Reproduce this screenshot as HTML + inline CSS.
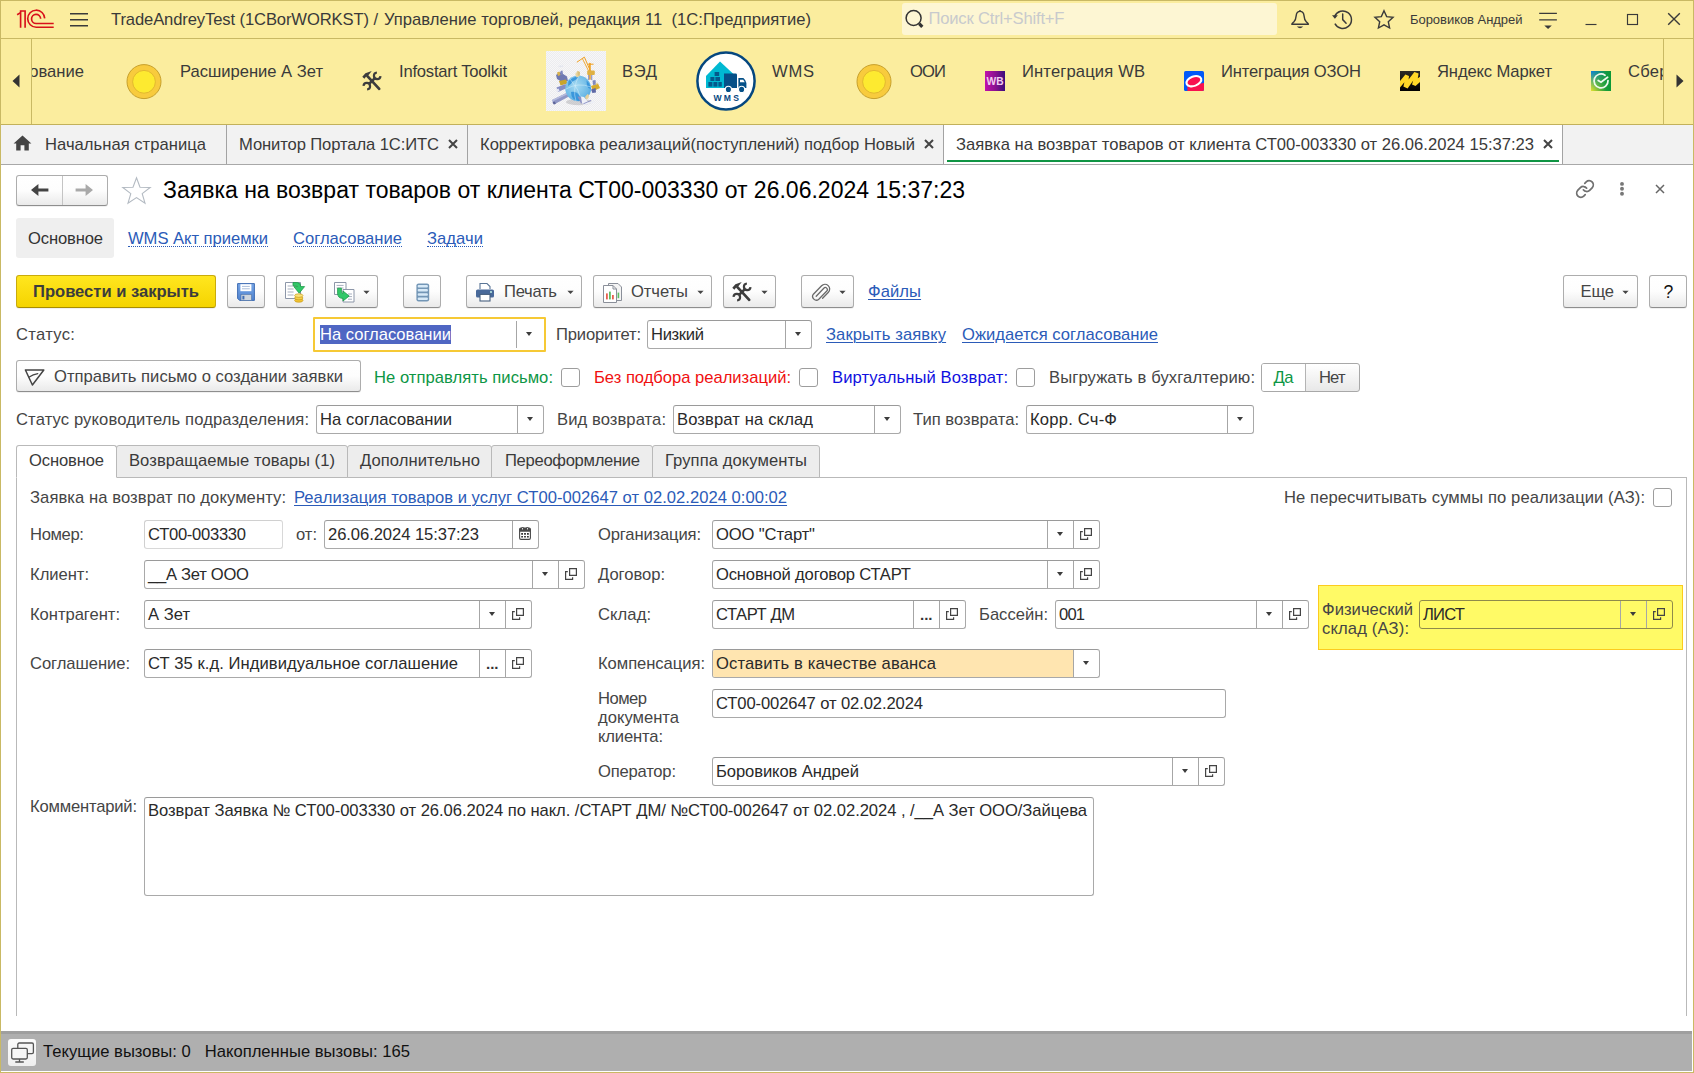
<!DOCTYPE html>
<html lang="ru"><head><meta charset="utf-8"><title>Заявка на возврат товаров от клиента</title>
<style>
*{box-sizing:border-box}
html,body{margin:0;padding:0}
body{width:1694px;height:1073px;overflow:hidden;position:relative;background:#fff;
 font-family:"Liberation Sans",sans-serif;font-size:16.6px;color:#454545;}
.a{position:absolute;white-space:nowrap}
.t{position:absolute;white-space:nowrap}
#titlebar{left:0;top:0;width:1694px;height:39px;background:#fbed9e;border-bottom:1px solid #c9b964}
#sections{left:0;top:39px;width:1694px;height:86px;background:#fbed9e;border-bottom:1px solid #c2b15b}
#tabs{left:0;top:125px;width:1694px;height:40px;background:#f2f2f2;border-bottom:1px solid #a8a8a8}
#status{left:1px;top:1031px;width:1691px;height:40px;background:#afafaf;border-top:3px solid #9f9f9f}
.tsep{position:absolute;top:0;width:1px;height:39px;background:#a3a3a3}
.x{position:absolute;top:12px;width:14px;height:14px}
.btn{position:absolute;border:1px solid #adadad;border-bottom-color:#8e8e8e;border-radius:3px;background:linear-gradient(#ffffff 0%,#fdfdfd 50%,#eaeaea 100%);box-shadow:0 1px 0 rgba(0,0,0,.06);white-space:nowrap;color:#444}
.fld{position:absolute;border:1px solid #a9a9a9;border-top-color:#9a9a9a;border-radius:3px;background:#fff}
.d{position:absolute;width:1px;background:#a6a6a6}
.arr{position:absolute;width:0;height:0;border-left:3.75px solid transparent;border-right:3.75px solid transparent;border-top:4.2px solid #3c3c3c}
.lnk{color:#2b5bb8;text-decoration:underline;text-underline-offset:2px;text-decoration-thickness:1px}
.dl{color:#2b5bb8}
.dl::after{content:"";position:absolute;left:0;right:0;bottom:2px;border-bottom:1px dotted #2b5bb8}
.cb{position:absolute;width:19px;height:19px;border:1px solid #9d9d9d;border-radius:3px;background:#fff}
.ptab{position:absolute;top:445px;height:33px;border:1px solid #b9b9b9;background:#ededed;border-radius:3px 3px 0 0}
</style></head>
<body>
<div id="titlebar" class="a"></div>
<svg class="a" style="left:14px;top:8px" width="42" height="22" viewBox="0 0 42 22">
<g fill="none" stroke="#d8111b" stroke-width="1.65">
<path d="M3.1 6.7 L6.6 4.6"/>
<path d="M6.6 19.7 V3 H11.1 V19.7"/>
<path d="M39.7 19.2 H22.2 A8.5 8.5 0 1 1 30.7 10.4"/>
<path d="M39.7 15.5 H22.1 A4.55 4.55 0 1 1 26.65 10.7"/>
</g></svg>
<svg class="a" style="left:69px;top:11px" width="20" height="17" viewBox="0 0 20 17"><g stroke="#3a3a3a" stroke-width="1.4"><path d="M1 2.7H19M1 8.7H19M1 14.7H19"/></g></svg>
<div class="t" style="left:111px;top:10px;height:20px;line-height:20px;letter-spacing:-0.116px;color:#3a3a3a;">TradeAndreyTest (1CBorWORKST) /</div>
<div class="t" style="left:384px;top:10px;height:20px;line-height:20px;letter-spacing:0.026px;color:#3a3a3a;">Управление торговлей, редакция 11&nbsp; (1С:Предприятие)</div>
<div class="a" style="left:902px;top:3px;width:375px;height:32px;background:#fdf6d3;border-radius:3px"></div>
<svg class="a" style="left:904px;top:8px" width="22" height="22" viewBox="0 0 22 22"><circle cx="9.6" cy="10" r="7.5" fill="none" stroke="#333" stroke-width="1.5"/><path d="M15.2 15.7 L18.3 18.8" stroke="#333" stroke-width="3.2" stroke-linecap="butt"/></svg>
<div class="t" style="left:928.5px;top:9px;height:20px;line-height:20px;letter-spacing:-0.184px;color:#c8cacd;">Поиск Ctrl+Shift+F</div>
<svg class="a" style="left:1289px;top:8px" width="22" height="23" viewBox="0 0 22 23"><g fill="none" stroke="#3a3a3a" stroke-width="1.4" stroke-linejoin="round"><path d="M11 1.9 V3.4"/><path d="M11 3.4 C8.6 3.4 7.4 5.2 7.2 7.6 C7 10.4 6.4 12.4 4.8 13.9 C3.8 14.9 3 15.6 2.8 16.3 H19.4 C19.2 15.6 18.4 14.9 17.4 13.9 C15.8 12.4 15.2 10.4 15 7.6 C14.8 5.2 13.4 3.4 11 3.4Z"/></g><path d="M7.8 18.5 H14.2 Q11 21.8 7.8 18.5Z" fill="#3a3a3a"/></svg>
<svg class="a" style="left:1331px;top:8px" width="24" height="23" viewBox="0 0 24 23"><g fill="none" stroke="#3a3a3a" stroke-width="1.45"><path d="M3.7 8.2 A8.75 8.75 0 1 1 3.9 15.6"/><path d="M11.7 6 V11.6 L15.1 15.2" stroke-linecap="round"/></g><path d="M1 7.2 H6.9 L3.9 10.8Z" fill="#3a3a3a"/></svg>
<svg class="a" style="left:1372px;top:8px" width="24" height="23" viewBox="0 0 24 23"><path d="M12.00 2.80 L14.65 8.66 L21.04 9.36 L16.28 13.69 L17.58 19.99 L12.00 16.80 L6.42 19.99 L7.72 13.69 L2.96 9.36 L9.35 8.66Z" fill="none" stroke="#3a3a3a" stroke-width="1.4" stroke-linejoin="miter"/></svg>
<div class="t" style="left:1410px;top:12px;height:16px;line-height:16px;font-size:13px;letter-spacing:-0.043px;color:#3a3a3a;">Боровиков Андрей</div>
<svg class="a" style="left:1537px;top:9px" width="22" height="22" viewBox="0 0 22 22"><path d="M2.2 4.4H19.9M2.2 10.9H19.9" stroke="#3a3a3a" stroke-width="1.25"/><path d="M7.3 16.4 H14.8 L11.05 20Z" fill="#3a3a3a"/></svg>
<svg class="a" style="left:1584px;top:10px" width="14" height="18" viewBox="0 0 14 18"><path d="M1.5 14.5H12.5" stroke="#3a3a3a" stroke-width="1.15"/></svg>
<svg class="a" style="left:1626px;top:13px" width="13" height="13" viewBox="0 0 13 13"><rect x="1.5" y="1.5" width="10" height="10" fill="none" stroke="#3a3a3a" stroke-width="1.15"/></svg>
<svg class="a" style="left:1667px;top:12px" width="14" height="14" viewBox="0 0 14 14"><path d="M1.2 1.2 L12.8 12.8 M12.8 1.2 L1.2 12.8" stroke="#3a3a3a" stroke-width="1.4"/></svg>
<div id="sections" class="a"></div>
<div class="a" style="left:31px;top:39px;width:1px;height:85px;background:#c9b964"></div>
<div class="a" style="left:1663px;top:39px;width:1px;height:85px;background:#c9b964"></div>
<svg class="a" style="left:12px;top:74px" width="8" height="14" viewBox="0 0 8 14"><path d="M7.5 0.5 L7.5 13.5 L0.5 7Z" fill="#333"/></svg>
<svg class="a" style="left:1676px;top:74px" width="8" height="14" viewBox="0 0 8 14"><path d="M0.5 0.5 L0.5 13.5 L7.5 7Z" fill="#333"/></svg>
<div class="a" style="left:32px;top:39px;width:60px;height:85px;overflow:hidden"><div class="t" style="left:-106.234px;top:23px;height:20px;line-height:20px;color:#3a3a3a;">Администрирование</div>
</div>
<svg class="a" style="left:125.5px;top:63px" width="36" height="37" viewBox="0 0 36 37"><circle cx="18" cy="18.6" r="17" fill="#f8cb3d" stroke="#c7a02c" stroke-width="1"/><circle cx="18" cy="18.8" r="11.4" fill="#fdea30" stroke="#e3b82f" stroke-width="1"/></svg>
<div class="t" style="left:180px;top:62px;height:20px;line-height:20px;letter-spacing:-0.023px;color:#3a3a3a;">Расширение А Зет</div>
<svg class="a" style="left:362px;top:71px" width="20" height="20" viewBox="0 0 20 20"><g fill="none" stroke="#3d3d3d"><path d="M6.6 13.4 L13.4 6.6" stroke-width="2.7"/><path d="M18.5 5.1 A3.3 3.3 0 1 1 14.9 1.5" stroke-width="2.2"/><path d="M1.5 14.9 A3.3 3.3 0 1 1 5.1 18.5" stroke-width="2.2"/><path d="M5.4 5.2 L17.2 17.8" stroke-width="2.7" stroke-linecap="round"/></g><path d="M0.3 5.8 L3.4 2.3 L9.8 0.1 L6.4 4.3 L4.8 4.7 L2.4 7.8Z" fill="#3d3d3d"/></svg>
<div class="t" style="left:399px;top:62px;height:20px;line-height:20px;letter-spacing:-0.206px;color:#3a3a3a;">Infostart Toolkit</div>
<svg class="a" style="left:546px;top:51px" width="60" height="60" viewBox="0 0 60 60"><defs><pattern id="ck" width="2" height="2" patternUnits="userSpaceOnUse"><rect width="2" height="2" fill="#f7f7f8"/><rect width="1" height="1" fill="#ececef"/><rect x="1" y="1" width="1" height="1" fill="#ececef"/></pattern><radialGradient id="gl" cx=".42" cy=".4" r=".7"><stop offset="0" stop-color="#a5daf2"/><stop offset=".7" stop-color="#6cb9e6"/><stop offset="1" stop-color="#4a9fdc"/></radialGradient></defs>
<rect width="60" height="60" fill="url(#ck)"/>
<ellipse cx="33" cy="51" rx="13" ry="3.2" fill="#8e8e96" opacity=".35"/>
<g fill="none" stroke="#f0a020" stroke-linecap="round"><path d="M31.2 11 L38.4 6.1 L44.4 20" stroke-width="1"/><path d="M36.6 8 L42.6 20" stroke-width=".9"/><path d="M43.9 12.6 V28" stroke-width="1.7"/><path d="M42.3 13.2 H47.2" stroke-width="1"/></g>
<rect x="41.2" y="19.4" width="7.6" height="4.6" rx="1" fill="#dfb143"/><rect x="42" y="24" width="1.3" height="5" fill="#9aa0c8"/><rect x="45" y="24" width="1.3" height="5" fill="#9aa0c8"/>
<path d="M10 24 L14 21 L21 25.5 L22 30 L16 31 L11 28Z" fill="#6f79b2"/><path d="M11 21.5 L13.5 20.5 L14.5 24 L12 25Z" fill="#d9b24c"/><path d="M14.5 20 L16.5 19.6 L17 23.5 L15 24Z" fill="#7d86bd"/>
<path d="M13 30 L20 28.6 L21.5 32.6 L14.5 34.6Z" fill="#c9a42b"/>
<path d="M10.5 36.5 L19.5 33 L21 37 L12 41Z" fill="#858dc4"/><path d="M10 38.5 L12.5 37.5 L13.5 40 L11 41Z" fill="#e6e8f4"/>
<path d="M6 49 L21.5 41.5 L23 45.6 L8 53.6Z" fill="#8f97c6"/><path d="M6 49 L21.5 41.5 L22 43 L6.6 50.4Z" fill="#b4b9dc"/><path d="M6.4 51.4 L8 53.6 L10 52.6 L8.6 50.4Z" fill="#5d6599"/>
<path d="M45 35 L52 32.6 L54 37 L47 40.2Z" fill="#d6ab2d"/><path d="M46.5 29.5 L49.5 29 L50 33.4 L47 34Z" fill="#7f88be"/><path d="M49.5 32 L51.6 31.6 L52 33 L50 33.6Z" fill="#e8d7a4"/><path d="M45 38.5 L49.6 37 L50 41.4 L46.4 42Z" fill="#5f69a6"/>
<circle cx="32.2" cy="37.4" r="12.9" fill="url(#gl)"/>
<path d="M22.5 30 Q27 25.6 33 25.4 Q30 29 26.5 30.5 Q25 34 22 35Z M40.5 29.5 Q44.5 33 44.6 38 Q42 37.5 41 34.5Z M25 41 Q30 40 33 44 Q36 46 37 49.4 Q31 51 27 47.6 Q25 45 25 41Z" fill="#2f8fd9" opacity=".85"/>
<path d="M20 38 Q32 31 45 36 M24 28 Q33 38 36 50 M33 24.6 Q26 38 30 50" stroke="#d9f0fb" stroke-width=".6" fill="none" opacity=".8"/>
<path d="M29.2 23 L31.5 20 L34 21 L33.6 25 L30.6 26.4Z" fill="#e9d6a0"/><path d="M31.5 20 L34 21 L33.6 25 L31.6 24.6Z" fill="#d9bf7c"/>
<path d="M39 46 L41.5 43 L43 44 L42.4 47.4 L40 48.6Z" fill="#e6d09a"/>
<path d="M31.5 45.5 L35 46 L37 52 L35 52.4Z" fill="#8a90c4"/><path d="M35 45.6 L38 46 L42.5 51.4 L47 49.8 L49 51.4 L38 54 L36 52Z" fill="#eef0f7"/><path d="M37 52.4 L45 49 L45.4 49.8 L38 53Z" fill="#8a90c4"/>
<path d="M12 15.6 L14.6 14 L15.6 15 L17 13.4 L17.2 15.4 L14.6 16.6Z" fill="#e4e6ee"/>
</svg>
<div class="t" style="left:622px;top:62px;height:20px;line-height:20px;letter-spacing:0.656px;color:#3a3a3a;">ВЭД</div>
<svg class="a" style="left:696px;top:51px" width="60" height="60" viewBox="0 0 60 60"><circle cx="30" cy="30" r="28.6" fill="#fff" stroke="#05477f" stroke-width="2.5"/>
<path d="M10 25 L24 10.6 L38 23.6 L36 37 L10 37Z" fill="#00b9d2"/>
<g fill="#04598c"><rect x="12.4" y="31" width="4" height="4.6"/><rect x="17.4" y="31" width="4" height="4.6"/><rect x="22.4" y="31" width="3.4" height="4.6"/><rect x="14.4" y="26" width="4" height="4"/><rect x="19.4" y="26" width="4.6" height="4"/><rect x="18.6" y="21" width="4.6" height="4"/></g>
<path d="M28 22.4 H39.6 Q41 22.4 41 23.8 V37 H28Z" fill="#055088"/><path d="M42.4 27 H47.4 Q49.4 28.6 50.4 32 V37 H42.4Z" fill="#055088"/><path d="M44 28.8 H47.2 L48.8 31.2 H44Z" fill="#fff"/>
<circle cx="32.4" cy="38.4" r="3.1" fill="#055088" stroke="#fff" stroke-width="1.1"/><circle cx="45.6" cy="38.4" r="3.1" fill="#055088" stroke="#fff" stroke-width="1.1"/>
<text x="31.4" y="50.2" text-anchor="middle" font-family="Liberation Sans, sans-serif" font-weight="bold" font-size="8.6" letter-spacing="2.3" fill="#05477f">WMS</text></svg>
<div class="t" style="left:772px;top:62px;height:20px;line-height:20px;letter-spacing:0.719px;color:#3a3a3a;">WMS</div>
<svg class="a" style="left:855.5px;top:63px" width="36" height="37" viewBox="0 0 36 37"><circle cx="18" cy="18.6" r="17" fill="#f8cb3d" stroke="#c7a02c" stroke-width="1"/><circle cx="18" cy="18.8" r="11.4" fill="#fdea30" stroke="#e3b82f" stroke-width="1"/></svg>
<div class="t" style="left:910px;top:62px;height:20px;line-height:20px;letter-spacing:-0.875px;color:#3a3a3a;">ООИ</div>
<svg class="a" style="left:985px;top:71px" width="20" height="20" viewBox="0 0 20 20"><defs><linearGradient id="wb" x1="0" x2="1" y1="0" y2="0"><stop offset="0" stop-color="#c211ab"/><stop offset=".55" stop-color="#86108e"/><stop offset="1" stop-color="#3b0c7c"/></linearGradient></defs><rect width="20" height="20" fill="url(#wb)"/><text x="1.6" y="13.8" font-family="Liberation Sans, sans-serif" font-weight="bold" font-size="10.6" textLength="17" lengthAdjust="spacingAndGlyphs" fill="#f1cdf1">WB</text></svg>
<div class="t" style="left:1022px;top:62px;height:20px;line-height:20px;letter-spacing:0.138px;color:#3a3a3a;">Интеграция WB</div>
<svg class="a" style="left:1184px;top:71px" width="20" height="20" viewBox="0 0 20 20"><defs><clipPath id="oz"><rect width="20" height="20" rx="1.6"/></clipPath></defs><g clip-path="url(#oz)"><rect width="20" height="20" fill="#0059f9"/><path d="M3.4 20 L3.4 14 L20 12 L20 20Z" fill="#f8114f"/><ellipse cx="9.9" cy="10.2" rx="7.7" ry="4.7" fill="#f8114f" stroke="#fff" stroke-width="2.1" transform="rotate(-20 9.9 10.2)"/></g></svg>
<div class="t" style="left:1221px;top:62px;height:20px;line-height:20px;letter-spacing:-0.161px;color:#3a3a3a;">Интеграция ОЗОН</div>
<svg class="a" style="left:1400px;top:71px" width="20" height="20" viewBox="0 0 20 20"><defs><linearGradient id="ym" x1="0" x2="0" y1="0" y2="1"><stop offset="0" stop-color="#2b2b24"/><stop offset="1" stop-color="#000"/></linearGradient></defs><rect width="20" height="20" fill="url(#ym)"/><path d="M0 10 L5.4 3.6 L9 5 L8.6 8.6 L14.4 1 L18.6 2.6 L17.8 7.2 L20 5.8 L20 11 L15.5 15 L12 13.4 L13.2 9.6 L7.6 17.4 L3.4 15.6 L4.4 11.2 L0 16.4Z" fill="#ffd928"/></svg>
<div class="t" style="left:1437px;top:62px;height:20px;line-height:20px;letter-spacing:-0.134px;color:#3a3a3a;">Яндекс Маркет</div>
<svg class="a" style="left:1591px;top:71px" width="20" height="20" viewBox="0 0 20 20"><defs><linearGradient id="sb1" x1="0" x2="0" y1="0" y2="1"><stop offset="0" stop-color="#0a7fe2"/><stop offset=".5" stop-color="#6fb86a"/><stop offset="1" stop-color="#e8e22c"/></linearGradient><linearGradient id="sb2" x1="0" x2="1" y1="0" y2="0"><stop offset="0" stop-color="#119a3a" stop-opacity="0"/><stop offset=".75" stop-color="#119a3a" stop-opacity=".95"/><stop offset="1" stop-color="#0c9836"/></linearGradient></defs><rect width="20" height="20" fill="url(#sb1)"/><rect width="20" height="20" fill="url(#sb2)"/><g fill="none" stroke="#eef8ee" stroke-width="1.8" stroke-linecap="round"><path d="M17 9.6 A7 7 0 1 1 14 4.2"/><path d="M7.2 9.4 L10 11.2 L16.6 6.2"/></g></svg>
<div class="a" style="left:1628px;top:39px;width:35px;height:85px;overflow:hidden"><div class="t" style="left:0px;top:23px;height:20px;line-height:20px;color:#3a3a3a;letter-spacing:.25px;">СберМегаМаркет</div>
</div>
<div id="tabs" class="a"></div>
<svg class="a" style="left:13px;top:135px" width="19" height="16" viewBox="0 0 19 16"><path d="M9.5 0.6 L0.6 8.4 H3.2 V15.4 H7.6 V10.2 H11.4 V15.4 H15.8 V8.4 H18.4Z" fill="#444"/></svg>
<div class="t" style="left:45px;top:135px;height:20px;line-height:20px;letter-spacing:0.026px;color:#3a3a3a;">Начальная страница</div>
<div class="tsep" style="left:226px;top:125px"></div>
<div class="t" style="left:239px;top:135px;height:20px;line-height:20px;letter-spacing:-0.106px;color:#3a3a3a;">Монитор Портала 1С:ИТС</div>
<svg class="a" style="left:446px;top:137px" width="14" height="14" viewBox="0 0 14 14"><path d="M3 3 L11 11 M11 3 L3 11" stroke="#444" stroke-width="2"/></svg>
<div class="tsep" style="left:467px;top:125px"></div>
<div class="t" style="left:480px;top:135px;height:20px;line-height:20px;letter-spacing:-0.027px;color:#3a3a3a;">Корректировка реализаций(поступлений) подбор Новый</div>
<svg class="a" style="left:922px;top:137px" width="14" height="14" viewBox="0 0 14 14"><path d="M3 3 L11 11 M11 3 L3 11" stroke="#444" stroke-width="2"/></svg>
<div class="tsep" style="left:943px;top:125px"></div>
<div class="a" style="left:944px;top:125px;width:618px;height:39px;background:#fff"></div>
<div class="a" style="left:947px;top:160px;width:612px;height:2px;background:#0f9443"></div>
<div class="t" style="left:956px;top:135px;height:20px;line-height:20px;letter-spacing:-0.004px;color:#3a3a3a;">Заявка на возврат товаров от клиента СТ00-003330 от 26.06.2024 15:37:23</div>
<svg class="a" style="left:1541px;top:137px" width="14" height="14" viewBox="0 0 14 14"><path d="M3 3 L11 11 M11 3 L3 11" stroke="#444" stroke-width="2"/></svg>
<div class="tsep" style="left:1562px;top:125px"></div>
<div class="btn" style="left:16px;top:175px;width:92px;height:31px"></div>
<div class="a" style="left:62px;top:176px;width:1px;height:29px;background:#c4c4c4"></div>
<svg class="a" style="left:30px;top:182px" width="20" height="16" viewBox="0 0 20 16"><path d="M1 8 L8.4 2 V6.6 H18.4 V9.4 H8.4 V14Z" fill="#444"/></svg>
<svg class="a" style="left:74px;top:182px" width="20" height="16" viewBox="0 0 20 16"><path d="M19 8 L11.6 2 V6.6 H1.6 V9.4 H11.6 V14Z" fill="#a9a9a9"/></svg>
<svg class="a" style="left:121px;top:176px" width="31" height="29" viewBox="0 0 31 29"><path d="M15.5 1.8 L19 11.2 L29.2 11.4 L21.2 17.6 L24 27.2 L15.5 21.6 L7 27.2 L9.8 17.6 L1.8 11.4 L12 11.2 Z" fill="#fff" stroke="#b3bac2" stroke-width="1.1" stroke-linejoin="miter"/></svg>
<div class="t" style="left:163px;top:177px;height:27px;line-height:27px;font-size:23px;letter-spacing:0.007px;color:#000;">Заявка на возврат товаров от клиента СТ00-003330 от 26.06.2024 15:37:23</div>
<svg class="a" style="left:1575px;top:179px" width="20" height="20" viewBox="0 0 24 24"><g fill="none" stroke="#707070" stroke-width="2.1" stroke-linecap="round" stroke-linejoin="round"><path d="M10 13a5 5 0 0 0 7.54.54l3-3a5 5 0 0 0-7.07-7.07l-1.72 1.71"/><path d="M14 11a5 5 0 0 0-7.54-.54l-3 3a5 5 0 0 0 7.07 7.07l1.71-1.71"/></g></svg>
<svg class="a" style="left:1617px;top:180px" width="10" height="18" viewBox="0 0 10 18"><g fill="#777"><circle cx="5" cy="3.9" r="1.95"/><circle cx="5" cy="8.8" r="1.95"/><circle cx="5" cy="13.7" r="1.95"/></g></svg>
<svg class="a" style="left:1654px;top:183px" width="12" height="12" viewBox="0 0 12 12"><path d="M2 2 L10 10 M10 2 L2 10" stroke="#666" stroke-width="1.5"/></svg>
<div class="a" style="left:16px;top:218px;width:98px;height:40px;background:#efefef;border-radius:3px"></div>
<div class="t" style="left:28px;top:229px;height:20px;line-height:20px;letter-spacing:-0.150px;color:#333;">Основное</div>
<div class="t dl" style="left:128px;top:229px;height:20px;line-height:20px;letter-spacing:-0.039px;">WMS Акт приемки</div>
<div class="t dl" style="left:293px;top:229px;height:20px;line-height:20px;letter-spacing:-0.004px;">Согласование</div>
<div class="t dl" style="left:427px;top:229px;height:20px;line-height:20px;letter-spacing:0.056px;">Задачи</div>
<div class="btn" style="left:16px;top:275px;width:200px;height:33px;background:linear-gradient(#ffe61f,#f5d400);border-color:#c9ab0c;border-bottom-color:#a88d00"></div>
<div class="t" style="left:33px;top:282px;height:20px;line-height:20px;font-weight:bold;letter-spacing:-0.022px;color:#3c3c3c;">Провести и закрыть</div>
<div class="btn" style="left:227px;top:275px;width:38px;height:33px"><svg class="a" style="left:9px;top:7px" width="18" height="18" viewBox="0 0 18 18"><defs><linearGradient id="sv" x1="0" x2="0" y1="0" y2="1"><stop offset="0" stop-color="#77a6e6"/><stop offset="1" stop-color="#4f83d0"/></linearGradient></defs><path d="M.6 .6 H17.4 V17.4 H2.6 L.6 15.4Z" fill="url(#sv)" stroke="#3f6db3" stroke-width="1"/><rect x="3.4" y="1.2" width="11" height="7" fill="#fff"/><path d="M5 3.4 H12.8 M5 5.8 H12.8" stroke="#a9bddb" stroke-width="1"/><rect x="4" y="11.4" width="10.6" height="6" fill="#cfd6de" stroke="#4a6fa6" stroke-width=".6"/><rect x="5.4" y="12.8" width="2" height="3.6" fill="#3f6db3"/></svg></div>
<div class="btn" style="left:276px;top:275px;width:38px;height:33px"><svg class="a" style="left:7px;top:5px" width="24" height="23" viewBox="0 0 24 23"><path d="M1.5 1.5 H16.5 V17.5 H1.5Z" fill="#fff" stroke="#8c96a8" stroke-width="1"/><path d="M3.6 5 H9.6 M3.6 8 H9.6 M3.6 11 H9.6 M3.6 14 H9.6" stroke="#a7afbf" stroke-width="1"/><path d="M9 1.6 H13.6 Q16.6 2 16.8 5.6 L20.6 5.6 L15.2 12.2 L9.8 5.6 L13.4 5.6 Q13.2 4.6 12 4.6 H9Z" fill="#32c869" stroke="#1a9a46" stroke-width=".8"/><ellipse cx="14.8" cy="19.4" rx="4.2" ry="1.8" fill="#f3c531" stroke="#c59a20" stroke-width=".7"/><ellipse cx="14.8" cy="17" rx="4.2" ry="1.8" fill="#f7d348" stroke="#c59a20" stroke-width=".7"/><ellipse cx="14.8" cy="14.6" rx="4.2" ry="1.8" fill="#fbe278" stroke="#c59a20" stroke-width=".7"/></svg></div>
<div class="btn" style="left:325px;top:275px;width:53px;height:33px"><svg class="a" style="left:7px;top:5px" width="23" height="23" viewBox="0 0 23 23"><path d="M1.5 1.5 H13 V13.5 H1.5Z" fill="#fff" stroke="#8c96a8"/><path d="M3.6 4.4 H10.6 M3.6 7 H10.6" stroke="#a7afbf"/><path d="M10 8.5 H21 V21 H10Z" fill="#fff" stroke="#8c96a8"/><path d="M15 13 H19 M15 15.6 H19 M15 18.2 H19" stroke="#a7afbf"/><path d="M4.6 7.2 H8.4 V11.2 Q8.4 12.4 10 12.4 V10 L16.2 15 L10 20 V17.4 Q4.6 17.4 4.6 12Z" fill="#32c869" stroke="#1a9a46" stroke-width=".8"/></svg><svg class="a" style="left:35.6px;top:14px" width="9" height="5" viewBox="0 0 9 5"><path d="M1.4 0.8 H7.6 L4.5 4Z" fill="#444"/></svg></div>
<div class="btn" style="left:403px;top:275px;width:38px;height:33px"><svg class="a" style="left:12px;top:7px" width="14" height="19" viewBox="0 0 14 19"><rect x=".4" y=".4" width="12.8" height="18" rx="2.2" fill="#7396b6"/><g fill="#d7e9f7"><rect x="1.7" y="1.9" width="10.2" height="2.5" rx="1"/><rect x="1.7" y="6.1" width="10.2" height="2.5" rx="1"/><rect x="1.7" y="10.3" width="10.2" height="2.5" rx="1"/><rect x="1.7" y="14.5" width="10.2" height="2.5" rx="1"/></g></svg></div>
<div class="btn" style="left:466px;top:275px;width:116px;height:33px"><svg class="a" style="left:8px;top:6px" width="20" height="20" viewBox="0 0 20 20"><path d="M5 7 V1.5 H12 L15 4.5 V7" fill="#fff" stroke="#5a7596" stroke-width="1.1"/><rect x="1" y="7.4" width="18" height="8.2" rx="1.6" fill="#48699a"/><rect x="5" y="12.4" width="10" height="6.6" fill="#fff" stroke="#47607f" stroke-width="1.1"/><circle cx="16" cy="10" r=".9" fill="#cfe"/></svg><svg class="a" style="left:98.7px;top:14px" width="9" height="5" viewBox="0 0 9 5"><path d="M1.4 0.8 H7.6 L4.5 4Z" fill="#444"/></svg></div>
<div class="t" style="left:504px;top:282px;height:20px;line-height:20px;letter-spacing:-0.272px;">Печать</div>
<div class="btn" style="left:593px;top:275px;width:119px;height:33px"><svg class="a" style="left:8px;top:5px" width="22" height="23" viewBox="0 0 22 23"><path d="M6.5 2.5 H16 L19.5 6 V19.5 H6.5Z" fill="#f4f4f4" stroke="#8a8f99"/><path d="M1.5 4.5 H11 L14.5 8 V21.5 H1.5Z" fill="#fff" stroke="#8a8f99"/><path d="M11 4.5 V8 H14.5" fill="none" stroke="#8a8f99"/><rect x="4" y="12.4" width="1.8" height="6" fill="#e8604f"/><rect x="7" y="10.6" width="1.8" height="7.8" fill="#5cbf62"/><rect x="10" y="14" width="1.8" height="4.4" fill="#e8604f"/><rect x="15.6" y="11.6" width="1.6" height="5.6" fill="#5cbf62"/></svg><svg class="a" style="left:101.7px;top:14px" width="9" height="5" viewBox="0 0 9 5"><path d="M1.4 0.8 H7.6 L4.5 4Z" fill="#444"/></svg></div>
<div class="t" style="left:631px;top:282px;height:20px;line-height:20px;letter-spacing:-0.072px;">Отчеты</div>
<div class="btn" style="left:723px;top:275px;width:53px;height:33px"><svg class="a" style="left:8px;top:6px" width="20" height="20" viewBox="0 0 20 20"><g fill="none" stroke="#3d3d3d"><path d="M6.6 13.4 L13.4 6.6" stroke-width="2.7"/><path d="M18.5 5.1 A3.3 3.3 0 1 1 14.9 1.5" stroke-width="2.2"/><path d="M1.5 14.9 A3.3 3.3 0 1 1 5.1 18.5" stroke-width="2.2"/><path d="M5.4 5.2 L17.2 17.8" stroke-width="2.7" stroke-linecap="round"/></g><path d="M0.3 5.8 L3.4 2.3 L9.8 0.1 L6.4 4.3 L4.8 4.7 L2.4 7.8Z" fill="#3d3d3d"/></svg><svg class="a" style="left:35.7px;top:14px" width="9" height="5" viewBox="0 0 9 5"><path d="M1.4 0.8 H7.6 L4.5 4Z" fill="#444"/></svg></div>
<div class="btn" style="left:801px;top:275px;width:53px;height:33px"><svg class="a" style="left:8px;top:5px" width="22" height="22" viewBox="0 0 22 22"><path d="M6.2 15.2 L13.8 7.2 A2 2 0 0 1 16.8 10 L8.8 18.2 A3.7 3.7 0 0 1 3.4 13.2 L11.6 4.8 A4.6 4.6 0 0 1 18.4 11.2 L12.6 17.2" fill="none" stroke="#6a6a6a" stroke-width="1.3" stroke-linecap="round"/></svg><svg class="a" style="left:35.7px;top:14px" width="9" height="5" viewBox="0 0 9 5"><path d="M1.4 0.8 H7.6 L4.5 4Z" fill="#444"/></svg></div>
<div class="t lnk" style="left:868px;top:282px;height:20px;line-height:20px;letter-spacing:0.066px;">Файлы</div>
<div class="btn" style="left:1563px;top:275px;width:75px;height:33px"><svg class="a" style="left:57px;top:14px" width="9" height="5" viewBox="0 0 9 5"><path d="M1.4 0.8 H7.6 L4.5 4Z" fill="#444"/></svg></div>
<div class="t" style="left:1580.5px;top:282px;height:20px;line-height:20px;letter-spacing:-0.133px;">Еще</div>
<div class="btn" style="left:1649px;top:275px;width:38px;height:33px"></div>
<div class="t" style="left:1663.5px;top:282px;height:21px;line-height:21px;font-size:17.6px;color:#111;">?</div>
<div class="t" style="left:16px;top:325px;height:20px;line-height:20px;letter-spacing:0.320px;">Статус:</div>
<div class="a" style="left:313px;top:317px;width:233px;height:35px;border:2px solid #f6c935;border-radius:1px;background:#fff"></div>
<div class="a" style="left:320px;top:325px;width:131px;height:19px;background:#4f66c3"></div>
<div class="t" style="left:320px;top:325px;height:20px;line-height:20px;letter-spacing:-0.029px;color:#fff;">На согласовании</div>
<div class="d" style="left:516px;top:321px;height:27px"></div>
<div class="arr" style="left:525.8px;top:332px"></div>
<div class="t" style="left:556px;top:325px;height:20px;line-height:20px;letter-spacing:-0.161px;">Приоритет:</div>
<div class="fld" style="left:647px;top:320px;width:165px;height:29px;"></div>
<div class="d" style="left:785px;top:321px;height:27px"></div>
<div class="arr" style="left:794.8px;top:332px"></div>
<div class="t" style="left:651px;top:325px;height:20px;line-height:20px;letter-spacing:-0.334px;color:#2a2a2a;">Низкий</div>
<div class="t" style="left:826px;top:325px;height:20px;line-height:20px;letter-spacing:0.084px;color:#2b5bb8;text-decoration:underline;text-underline-offset:2px;text-decoration-thickness:1px;">Закрыть заявку</div>
<div class="t" style="left:962px;top:325px;height:20px;line-height:20px;letter-spacing:0.013px;color:#2b5bb8;text-decoration:underline;text-underline-offset:2px;text-decoration-thickness:1px;">Ожидается согласование</div>
<div class="btn" style="left:16px;top:360px;width:345px;height:32px"></div>
<svg class="a" style="left:23px;top:367px" width="24" height="20" viewBox="0 0 24 20"><g fill="none" stroke="#444" stroke-width="1.5" stroke-linejoin="round" stroke-linecap="round"><path d="M2.4 3 H20.8 L9.4 18 Z"/><path d="M6.3 10.1 Q10 7.6 14.8 6.7" stroke-width="1.2"/></g></svg>
<div class="t" style="left:54px;top:367px;height:20px;line-height:20px;letter-spacing:0.020px;color:#444;">Отправить письмо о создании заявки</div>
<div class="t" style="left:374px;top:368px;height:20px;line-height:20px;letter-spacing:0.043px;color:#0d9645;">Не отправлять письмо:</div>
<div class="cb" style="left:561px;top:368px"></div>
<div class="t" style="left:594px;top:368px;height:20px;line-height:20px;letter-spacing:-0.020px;color:#f01010;">Без подбора реализаций:</div>
<div class="cb" style="left:799px;top:368px"></div>
<div class="t" style="left:832px;top:368px;height:20px;line-height:20px;letter-spacing:0.081px;color:#1010e0;">Виртуальный Возврат:</div>
<div class="cb" style="left:1016px;top:368px"></div>
<div class="t" style="left:1049px;top:368px;height:20px;line-height:20px;letter-spacing:0.115px;">Выгружать в бухгалтерию:</div>
<div class="btn" style="left:1261px;top:363px;width:99px;height:29px;box-shadow:none;border-color:#a8a8a8;background:linear-gradient(#fff,#e8e8e8)"></div>
<div class="a" style="left:1262px;top:364px;width:44px;height:27px;background:#fff;border-radius:2px 0 0 2px;border-right:1px solid #b4b4b4"></div>
<div class="t" style="left:1273.5px;top:368px;height:20px;line-height:20px;letter-spacing:-0.469px;color:#0d9645;">Да</div>
<div class="t" style="left:1319px;top:368px;height:20px;line-height:20px;letter-spacing:-0.883px;">Нет</div>
<div class="t" style="left:16px;top:410px;height:20px;line-height:20px;letter-spacing:0.124px;">Статус руководитель подразделения:</div>
<div class="fld" style="left:316px;top:405px;width:228px;height:29px;"></div>
<div class="d" style="left:517px;top:406px;height:27px"></div>
<div class="arr" style="left:526.8px;top:417px"></div>
<div class="t" style="left:320px;top:410px;height:20px;line-height:20px;letter-spacing:0.042px;color:#2a2a2a;">На согласовании</div>
<div class="t" style="left:557px;top:410px;height:20px;line-height:20px;letter-spacing:0.077px;">Вид возврата:</div>
<div class="fld" style="left:673px;top:405px;width:228px;height:29px;"></div>
<div class="d" style="left:874px;top:406px;height:27px"></div>
<div class="arr" style="left:883.8px;top:417px"></div>
<div class="t" style="left:677px;top:410px;height:20px;line-height:20px;letter-spacing:0.121px;color:#2a2a2a;">Возврат на склад</div>
<div class="t" style="left:913px;top:410px;height:20px;line-height:20px;letter-spacing:0.023px;">Тип возврата:</div>
<div class="fld" style="left:1026px;top:405px;width:228px;height:29px;"></div>
<div class="d" style="left:1227px;top:406px;height:27px"></div>
<div class="arr" style="left:1236.8px;top:417px"></div>
<div class="t" style="left:1030px;top:410px;height:20px;line-height:20px;letter-spacing:0.203px;color:#2a2a2a;">Корр. Сч-Ф</div>
<div class="a" style="left:16px;top:477px;width:1671px;height:539px;border:1px solid #b9b9b9;border-bottom:none"></div>
<div class="ptab" style="left:347px;width:145px;"></div>
<div class="t" style="left:360px;top:451px;height:20px;line-height:20px;letter-spacing:0.047px;color:#3a3a3a;">Дополнительно</div>
<div class="ptab" style="left:491px;width:162px;"></div>
<div class="t" style="left:505px;top:451px;height:20px;line-height:20px;letter-spacing:-0.303px;color:#3a3a3a;">Переоформление</div>
<div class="ptab" style="left:652px;width:168px;"></div>
<div class="t" style="left:665px;top:451px;height:20px;line-height:20px;letter-spacing:0.067px;color:#3a3a3a;">Группа документы</div>
<div class="ptab" style="left:116px;width:232px;"></div>
<div class="t" style="left:129px;top:451px;height:20px;line-height:20px;letter-spacing:0.053px;color:#3a3a3a;">Возвращаемые товары (1)</div>
<div class="ptab" style="left:16px;width:101px;background:#fff;border-bottom-color:#fff;"></div>
<div class="t" style="left:29px;top:451px;height:20px;line-height:20px;letter-spacing:-0.150px;color:#3a3a3a;">Основное</div>
<div class="t" style="left:30px;top:488px;height:20px;line-height:20px;letter-spacing:0.077px;">Заявка на возврат по документу:</div>
<div class="t" style="left:294px;top:488px;height:20px;line-height:20px;letter-spacing:0.019px;color:#2b5bb8;text-decoration:underline;text-underline-offset:2px;text-decoration-thickness:1px;">Реализация товаров и услуг СТ00-002647 от 02.02.2024 0:00:02</div>
<div class="t" style="left:1284px;top:488px;height:20px;line-height:20px;letter-spacing:0.081px;">Не пересчитывать суммы по реализации (АЗ):</div>
<div class="cb" style="left:1653px;top:488px"></div>
<div class="t" style="left:30px;top:525px;height:20px;line-height:20px;letter-spacing:-0.341px;">Номер:</div>
<div class="fld" style="left:144px;top:520px;width:139px;height:29px;border-color:#d0d0d0 #d8d8d8 #d8d8d8 #d0d0d0;"></div>
<div class="t" style="left:148px;top:525px;height:20px;line-height:20px;letter-spacing:-0.294px;color:#2a2a2a;">СТ00-003330</div>
<div class="t" style="left:296px;top:525px;height:20px;line-height:20px;letter-spacing:-0.039px;">от:</div>
<div class="fld" style="left:324px;top:520px;width:215px;height:29px;"></div>
<div class="d" style="left:512px;top:521px;height:27px"></div>
<svg class="a" style="left:519px;top:527px" width="12" height="14" viewBox="0 0.6 12 14"><rect x=".6" y="1.6" width="10.8" height="11.4" rx="1.3" fill="#fff" stroke="#484848" stroke-width="1.1"/><path d="M.6 5.4 V2.9 Q.6 1.6 1.9 1.6 H10.1 Q11.4 1.6 11.4 2.9 V5.4Z" fill="#4a4a4a"/><ellipse cx="3.6" cy="2.2" rx="1.25" ry="1.7" fill="#4a4a4a"/><ellipse cx="8.4" cy="2.2" rx="1.25" ry="1.7" fill="#4a4a4a"/><ellipse cx="3.6" cy="2.3" rx=".45" ry=".9" fill="#fff"/><ellipse cx="8.4" cy="2.3" rx=".45" ry=".9" fill="#fff"/><g fill="#2c2c2c"><rect x="2.2" y="6.6" width="1.8" height="1.7" rx=".3"/><rect x="5.1" y="6.6" width="1.8" height="1.7" rx=".3"/><rect x="8" y="6.6" width="1.8" height="1.7" rx=".3"/><rect x="2.2" y="9.5" width="1.8" height="1.7" rx=".3"/><rect x="5.1" y="9.5" width="1.8" height="1.7" rx=".3"/><rect x="8" y="9.5" width="1.8" height="1.7" rx=".3"/></g></svg>
<div class="t" style="left:328px;top:525px;height:20px;line-height:20px;letter-spacing:-0.070px;color:#2a2a2a;">26.06.2024 15:37:23</div>
<div class="t" style="left:598px;top:525px;height:20px;line-height:20px;letter-spacing:-0.155px;">Организация:</div>
<div class="fld" style="left:712px;top:520px;width:388px;height:29px;"></div>
<div class="d" style="left:1047px;top:521px;height:27px"></div>
<div class="arr" style="left:1056.8px;top:532px"></div>
<div class="d" style="left:1073px;top:521px;height:27px"></div>
<svg class="a" style="left:1079px;top:527px" width="14" height="14" viewBox="0 0 14 14"><g fill="none" stroke="#444" stroke-width="1.2"><path d="M5.6 1.6 H12.4 V8.4 H5.6Z"/><path d="M3.8 4.6 H1.6 V12.4 H8.6 V10.2"/></g></svg>
<div class="t" style="left:716px;top:525px;height:20px;line-height:20px;letter-spacing:-0.120px;color:#2a2a2a;">ООО "Старт"</div>
<div class="t" style="left:30px;top:565px;height:20px;line-height:20px;letter-spacing:-0.039px;">Клиент:</div>
<div class="fld" style="left:144px;top:560px;width:441px;height:29px;"></div>
<div class="d" style="left:532px;top:561px;height:27px"></div>
<div class="arr" style="left:541.8px;top:572px"></div>
<div class="d" style="left:558px;top:561px;height:27px"></div>
<svg class="a" style="left:564px;top:567px" width="14" height="14" viewBox="0 0 14 14"><g fill="none" stroke="#444" stroke-width="1.2"><path d="M5.6 1.6 H12.4 V8.4 H5.6Z"/><path d="M3.8 4.6 H1.6 V12.4 H8.6 V10.2"/></g></svg>
<div class="t" style="left:148px;top:565px;height:20px;line-height:20px;letter-spacing:-0.278px;color:#2a2a2a;">__А Зет ООО</div>
<div class="t" style="left:598px;top:565px;height:20px;line-height:20px;letter-spacing:-0.040px;">Договор:</div>
<div class="fld" style="left:712px;top:560px;width:388px;height:29px;"></div>
<div class="d" style="left:1047px;top:561px;height:27px"></div>
<div class="arr" style="left:1056.8px;top:572px"></div>
<div class="d" style="left:1073px;top:561px;height:27px"></div>
<svg class="a" style="left:1079px;top:567px" width="14" height="14" viewBox="0 0 14 14"><g fill="none" stroke="#444" stroke-width="1.2"><path d="M5.6 1.6 H12.4 V8.4 H5.6Z"/><path d="M3.8 4.6 H1.6 V12.4 H8.6 V10.2"/></g></svg>
<div class="t" style="left:716px;top:565px;height:20px;line-height:20px;letter-spacing:-0.179px;color:#2a2a2a;">Основной договор СТАРТ</div>
<div class="t" style="left:30px;top:605px;height:20px;line-height:20px;letter-spacing:-0.042px;">Контрагент:</div>
<div class="fld" style="left:144px;top:600px;width:388px;height:29px;"></div>
<div class="d" style="left:479px;top:601px;height:27px"></div>
<div class="arr" style="left:488.8px;top:612px"></div>
<div class="d" style="left:505px;top:601px;height:27px"></div>
<svg class="a" style="left:511px;top:607px" width="14" height="14" viewBox="0 0 14 14"><g fill="none" stroke="#444" stroke-width="1.2"><path d="M5.6 1.6 H12.4 V8.4 H5.6Z"/><path d="M3.8 4.6 H1.6 V12.4 H8.6 V10.2"/></g></svg>
<div class="t" style="left:148px;top:605px;height:20px;line-height:20px;letter-spacing:0.004px;color:#2a2a2a;">А Зет</div>
<div class="t" style="left:598px;top:605px;height:20px;line-height:20px;letter-spacing:0.072px;">Склад:</div>
<div class="fld" style="left:712px;top:600px;width:254px;height:29px;"></div>
<div class="d" style="left:913px;top:601px;height:27px"></div>
<div class="t" style="left:920px;top:606px;height:18px;line-height:18px;font-size:15px;color:#333;font-weight:bold;">...</div>
<div class="d" style="left:939px;top:601px;height:27px"></div>
<svg class="a" style="left:945px;top:607px" width="14" height="14" viewBox="0 0 14 14"><g fill="none" stroke="#444" stroke-width="1.2"><path d="M5.6 1.6 H12.4 V8.4 H5.6Z"/><path d="M3.8 4.6 H1.6 V12.4 H8.6 V10.2"/></g></svg>
<div class="t" style="left:716px;top:605px;height:20px;line-height:20px;letter-spacing:-0.460px;color:#2a2a2a;">СТАРТ ДМ</div>
<div class="t" style="left:979px;top:605px;height:20px;line-height:20px;letter-spacing:0.002px;">Бассейн:</div>
<div class="fld" style="left:1055px;top:600px;width:254px;height:29px;"></div>
<div class="d" style="left:1256px;top:601px;height:27px"></div>
<div class="arr" style="left:1265.8px;top:612px"></div>
<div class="d" style="left:1282px;top:601px;height:27px"></div>
<svg class="a" style="left:1288px;top:607px" width="14" height="14" viewBox="0 0 14 14"><g fill="none" stroke="#444" stroke-width="1.2"><path d="M5.6 1.6 H12.4 V8.4 H5.6Z"/><path d="M3.8 4.6 H1.6 V12.4 H8.6 V10.2"/></g></svg>
<div class="t" style="left:1059px;top:605px;height:20px;line-height:20px;letter-spacing:-0.844px;color:#2a2a2a;">001</div>
<div class="a" style="left:1318px;top:585px;width:365px;height:65px;background:#fffa66;border:1px solid #fccb1e"></div>
<div class="t" style="left:1322px;top:600px;height:20px;line-height:20px;letter-spacing:0.030px;">Физический</div>
<div class="t" style="left:1322px;top:619px;height:20px;line-height:20px;letter-spacing:0.148px;">склад (АЗ):</div>
<div class="fld" style="left:1419px;top:600px;width:254px;height:29px;background:#fffa66;border-color:#8f8a4a;"></div>
<div class="d" style="left:1620px;top:601px;height:27px"></div>
<div class="arr" style="left:1629.8px;top:612px"></div>
<div class="d" style="left:1646px;top:601px;height:27px"></div>
<svg class="a" style="left:1652px;top:607px" width="14" height="14" viewBox="0 0 14 14"><g fill="none" stroke="#444" stroke-width="1.2"><path d="M5.6 1.6 H12.4 V8.4 H5.6Z"/><path d="M3.8 4.6 H1.6 V12.4 H8.6 V10.2"/></g></svg>
<div class="t" style="left:1423px;top:605px;height:20px;line-height:20px;letter-spacing:-0.797px;color:#2a2a2a;">ЛИСТ</div>
<div class="t" style="left:30px;top:654px;height:20px;line-height:20px;letter-spacing:-0.062px;">Соглашение:</div>
<div class="fld" style="left:144px;top:649px;width:388px;height:29px;"></div>
<div class="d" style="left:479px;top:650px;height:27px"></div>
<div class="t" style="left:486px;top:655px;height:18px;line-height:18px;font-size:15px;color:#333;font-weight:bold;">...</div>
<div class="d" style="left:505px;top:650px;height:27px"></div>
<svg class="a" style="left:511px;top:656px" width="14" height="14" viewBox="0 0 14 14"><g fill="none" stroke="#444" stroke-width="1.2"><path d="M5.6 1.6 H12.4 V8.4 H5.6Z"/><path d="M3.8 4.6 H1.6 V12.4 H8.6 V10.2"/></g></svg>
<div class="t" style="left:148px;top:654px;height:20px;line-height:20px;letter-spacing:0.050px;color:#2a2a2a;">СТ 35 к.д. Индивидуальное соглашение</div>
<div class="t" style="left:598px;top:654px;height:20px;line-height:20px;letter-spacing:-0.053px;">Компенсация:</div>
<div class="fld" style="left:712px;top:649px;width:388px;height:29px;"></div>
<div class="a" style="left:713px;top:650px;width:360px;height:27px;background:#ffe5b0;border-radius:2px 0 0 2px"></div>
<div class="d" style="left:1073px;top:650px;height:27px"></div>
<div class="arr" style="left:1082.8px;top:661px"></div>
<div class="t" style="left:716px;top:654px;height:20px;line-height:20px;letter-spacing:0.131px;color:#2a2a2a;">Оставить в качестве аванса</div>
<div class="t" style="left:598px;top:689px;height:20px;line-height:20px;letter-spacing:-0.520px;">Номер</div>
<div class="t" style="left:598px;top:708px;height:20px;line-height:20px;letter-spacing:0.010px;">документа</div>
<div class="t" style="left:598px;top:727px;height:20px;line-height:20px;letter-spacing:-0.150px;">клиента:</div>
<div class="fld" style="left:712px;top:689px;width:514px;height:29px;"></div>
<div class="t" style="left:716px;top:694px;height:20px;line-height:20px;letter-spacing:-0.111px;color:#2a2a2a;">СТ00-002647 от 02.02.2024</div>
<div class="t" style="left:598px;top:762px;height:20px;line-height:20px;letter-spacing:-0.213px;">Оператор:</div>
<div class="fld" style="left:712px;top:757px;width:513px;height:29px;"></div>
<div class="d" style="left:1172px;top:758px;height:27px"></div>
<div class="arr" style="left:1181.8px;top:769px"></div>
<div class="d" style="left:1198px;top:758px;height:27px"></div>
<svg class="a" style="left:1204px;top:764px" width="14" height="14" viewBox="0 0 14 14"><g fill="none" stroke="#444" stroke-width="1.2"><path d="M5.6 1.6 H12.4 V8.4 H5.6Z"/><path d="M3.8 4.6 H1.6 V12.4 H8.6 V10.2"/></g></svg>
<div class="t" style="left:716px;top:762px;height:20px;line-height:20px;letter-spacing:-0.094px;color:#2a2a2a;">Боровиков Андрей</div>
<div class="t" style="left:30px;top:797px;height:20px;line-height:20px;letter-spacing:-0.193px;">Комментарий:</div>
<div class="fld" style="left:144px;top:797px;width:950px;height:99px"></div>
<div class="t" style="left:148px;top:801px;height:20px;line-height:20px;letter-spacing:-0.053px;color:#2a2a2a;">Возврат Заявка № СТ00-003330 от 26.06.2024 по накл. /СТАРТ ДМ/ №СТ00-002647 от 02.02.2024 , /__А Зет ООО/Зайцева</div>
<div id="status" class="a"></div>
<div class="a" style="left:8px;top:1039px;width:28px;height:27px;background:linear-gradient(#fbfbfb,#efefef);border-radius:3px"></div>
<svg class="a" style="left:10px;top:1041px" width="25" height="23" viewBox="0 0 25 23"><g fill="#f6f6f6" stroke="#555" stroke-width="1.3"><rect x="7.8" y="2" width="15.6" height="10.6" rx="1.4"/><rect x="1.7" y="7.4" width="15.6" height="10.6" rx="1.4"/></g><path d="M9.5 18 V20.6 M5.3 21 H13.8" stroke="#555" stroke-width="1.3"/></svg>
<div class="t" style="left:43px;top:1042px;height:20px;line-height:20px;letter-spacing:0.017px;color:#111;">Текущие вызовы: 0&nbsp;&nbsp; Накопленные вызовы: 165</div>
<div class="a" style="left:0;top:0;width:1px;height:1073px;background:#c9b964"></div>
<div class="a" style="left:1693px;top:0;width:1px;height:1073px;background:#c9b964"></div>
<div class="a" style="left:0;top:0;width:1694px;height:1px;background:#c9b964"></div>
<div class="a" style="left:0;top:1072px;width:1694px;height:1px;background:#c9b964"></div>
</body></html>
